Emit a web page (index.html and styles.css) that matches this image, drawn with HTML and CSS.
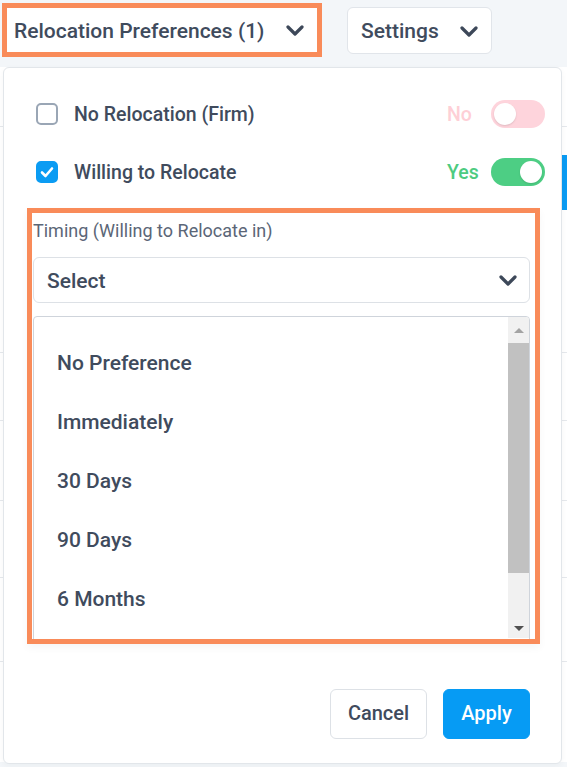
FILE: index.html
```html
<!DOCTYPE html>
<html lang="en">
<head>
<meta charset="utf-8">
<title>Relocation Preferences</title>
<link rel="stylesheet" href="styles.css">
</head>
<body>
<div class="page">
  <div class="toolbar">
    <button class="filter-btn highlight">
      <span>Relocation Preferences (1)</span>
      <svg class="chev" viewBox="0 0 18 11" width="18" height="11"><path d="M2 2 L9 9 L16 2" fill="none" stroke="#3d4859" stroke-width="3.2" stroke-linecap="round" stroke-linejoin="round"/></svg>
    </button>
    <button class="filter-btn plain">
      <span>Settings</span>
      <svg class="chev" viewBox="0 0 18 11" width="18" height="11"><path d="M2 2 L9 9 L16 2" fill="none" stroke="#3d4859" stroke-width="3.2" stroke-linecap="round" stroke-linejoin="round"/></svg>
    </button>
  </div>
  <div class="bg-table">
    <div class="bg-row r1"></div>
    <div class="bg-row r2"><span class="bg-accent"></span></div>
    <div class="bg-row r3"></div>
    <div class="bg-row r4"></div>
    <div class="bg-row r5"></div>
    <div class="bg-row r6"></div>
    <div class="bg-row r7"></div>
  </div>

  <div class="panel">
    <div class="opt-row">
      <span class="checkbox"></span>
      <span class="opt-label">No Relocation (Firm)</span>
      <span class="state no">No</span>
      <span class="toggle off"><span class="knob"></span></span>
    </div>
    <div class="opt-row">
      <span class="checkbox checked">
        <svg viewBox="0 0 22 22" width="22" height="22"><path d="M6 11.5 L9.5 15 L16 7.5" fill="none" stroke="#fff" stroke-width="2.6" stroke-linecap="round" stroke-linejoin="round"/></svg>
      </span>
      <span class="opt-label">Willing to Relocate</span>
      <span class="state yes">Yes</span>
      <span class="toggle on"><span class="knob"></span></span>
    </div>

    <div class="timing">
      <div class="timing-label">Timing (Willing to Relocate in)</div>
      <div class="select">
        <span>Select</span>
        <svg class="chev" viewBox="0 0 18 11" width="18" height="11"><path d="M2 2 L9 9 L16 2" fill="none" stroke="#3d4859" stroke-width="3.2" stroke-linecap="round" stroke-linejoin="round"/></svg>
      </div>
      <div class="listbox">
        <div class="options">
          <div class="option">No Preference</div>
          <div class="option">Immediately</div>
          <div class="option">30 Days</div>
          <div class="option">90 Days</div>
          <div class="option">6 Months</div>
        </div>
        <div class="scrollbar">
          <span class="arrow up"></span>
          <span class="thumb"></span>
          <span class="arrow down"></span>
        </div>
      </div>
    </div>

    <div class="actions">
      <button class="btn cancel">Cancel</button>
      <button class="btn apply">Apply</button>
    </div>
  </div>
</div>
</body>
</html>
```

FILE: styles.css
```css
* { box-sizing: border-box; }

html, body {
  margin: 0;
  padding: 0;
}

body {
  background: #f3f6f9;
  font-family: Roboto, "Noto Sans", "Liberation Sans", sans-serif;
  color: #404b5d;
  width: 567px;
  height: 767px;
  overflow: hidden;
}

.page {
  position: relative;
  width: 567px;
  height: 767px;
}

.toolbar {
  display: flex;
  align-items: flex-start;
  gap: 25px;
  padding: 3px 0 0 2px;
  height: 60px;
}

.filter-btn {
  display: flex;
  align-items: center;
  justify-content: space-between;
  background: #fff;
  font-family: inherit;
  font-size: 21px;
  font-weight: 500;
  color: #404b5d;
  cursor: pointer;
}

.filter-btn.highlight {
  width: 320px;
  height: 54px;
  border: 5px solid #f98b59;
  padding: 1px 13px 0 7px;
}

.filter-btn.plain {
  margin-top: 4px;
  width: 145px;
  height: 47px;
  border: 1px solid #e1e5ea;
  border-radius: 6px;
  padding: 1px 13px 0 13px;
}

.chev { display: block; }

.bg-table {
  background: #fff;
  margin-top: 7px;
}

.bg-row { border-bottom: 1px solid #e5e8ec; position: relative; }
.bg-row.r1 { height: 60px; }
.bg-row.r2 { height: 226px; }
.bg-row.r3 { height: 68px; }
.bg-row.r4 { height: 80px; }
.bg-row.r5 { height: 77px; }
.bg-row.r6 { height: 84px; }
.bg-row.r7 { height: 100px; border-bottom: none; }

.bg-accent {
  position: absolute;
  right: 0;
  top: 28px;
  width: 5px;
  height: 55px;
  background: #0b9bf3;
}

/* dropdown panel overlays the page */
.panel {
  position: absolute;
  left: 3px;
  top: 67px;
  width: 559px;
  height: 697px;
  background: #fff;
  border: 1px solid #e2e6ea;
  border-radius: 6px;
  padding: 17px 16px 0 23px;
  box-shadow: 0 2px 6px rgba(30, 40, 60, 0.04);
}

.opt-row {
  display: flex;
  align-items: center;
  height: 58px;
  padding-left: 9px;
}

.checkbox {
  width: 22px;
  height: 22px;
  border: 2.5px solid #9aa6b5;
  border-radius: 5px;
  flex: none;
  display: flex;
  align-items: center;
  justify-content: center;
}

.checkbox.checked {
  background: #0b9cf3;
  border-color: #0b9cf3;
}

.checkbox svg { display: block; flex: none; }

.opt-label {
  margin-left: 16px;
  font-size: 19.5px;
  font-weight: 500;
  flex: 1;
}

.state {
  font-size: 19.5px;
  font-weight: 500;
  width: 44px;
  flex: none;
}

.state.no { color: #fecfd6; }
.state.yes { color: #4dcb80; }

.toggle {
  width: 54px;
  height: 28px;
  border-radius: 14px;
  position: relative;
  flex: none;
}

.toggle.off { background: #fed4dc; }
.toggle.on { background: #4dce84; }

.knob {
  position: absolute;
  top: 3px;
  width: 22px;
  height: 22px;
  border-radius: 50%;
  background: #fff;
  box-shadow: 0 1px 2px rgba(0, 0, 0, 0.12);
}

.toggle.off .knob { left: 3px; }
.toggle.on .knob { right: 3px; }

.timing {
  margin-top: 7px;
  width: 513px;
  height: 436px;
  border: 5px solid #f98b59;
  padding: 7px 5px 0 1px;
  overflow: hidden;
  box-shadow: 0 4px 8px rgba(0, 0, 0, 0.04);
}

.timing-label {
  font-size: 18px;
  line-height: 22px;
  color: #5b6677;
  font-weight: 400;
}

.select {
  margin-top: 15px;
  height: 46px;
  border: 1px solid #dde1e6;
  border-radius: 6px;
  display: flex;
  align-items: center;
  justify-content: space-between;
  padding: 1px 12px 0 13px;
  font-size: 21px;
  font-weight: 500;
}

.listbox {
  margin-top: 13px;
  height: 340px;
  border: 1px solid #cfd4db;
  border-radius: 4px 4px 0 0;
  display: flex;
  overflow: hidden;
}

.options {
  flex: 1;
  padding-top: 16px;
}

.option {
  height: 59px;
  display: flex;
  align-items: center;
  padding-left: 23px;
  font-size: 21px;
  font-weight: 500;
  color: #404b5d;
}

.scrollbar {
  width: 21px;
  background: #f1f1f1;
  display: flex;
  flex-direction: column;
  align-items: center;
  height: 321px;
}

.arrow {
  width: 0;
  height: 0;
  border-left: 5px solid transparent;
  border-right: 5px solid transparent;
  flex: none;
}

.arrow.up {
  border-bottom: 5px solid #a3a3a3;
  margin: 11px 0 10px;
}

.arrow.down {
  border-top: 5px solid #505050;
  margin: auto 0 7px;
}

.thumb {
  width: 100%;
  height: 230px;
  background: #c1c1c1;
  flex: none;
}

.actions {
  display: flex;
  justify-content: flex-end;
  gap: 16px;
  margin-top: 45px;
  padding-right: 15px;
}

.btn {
  height: 50px;
  border-radius: 6px;
  font-family: inherit;
  font-size: 20px;
  font-weight: 500;
  padding: 0 0 3px;
  cursor: pointer;
}

.btn.cancel {
  width: 97px;
  background: #fff;
  border: 1px solid #dde1e6;
  color: #404b5d;
}

.btn.apply {
  width: 87px;
  background: #069bf4;
  border: 1px solid #069bf4;
  color: #fff;
}
```
